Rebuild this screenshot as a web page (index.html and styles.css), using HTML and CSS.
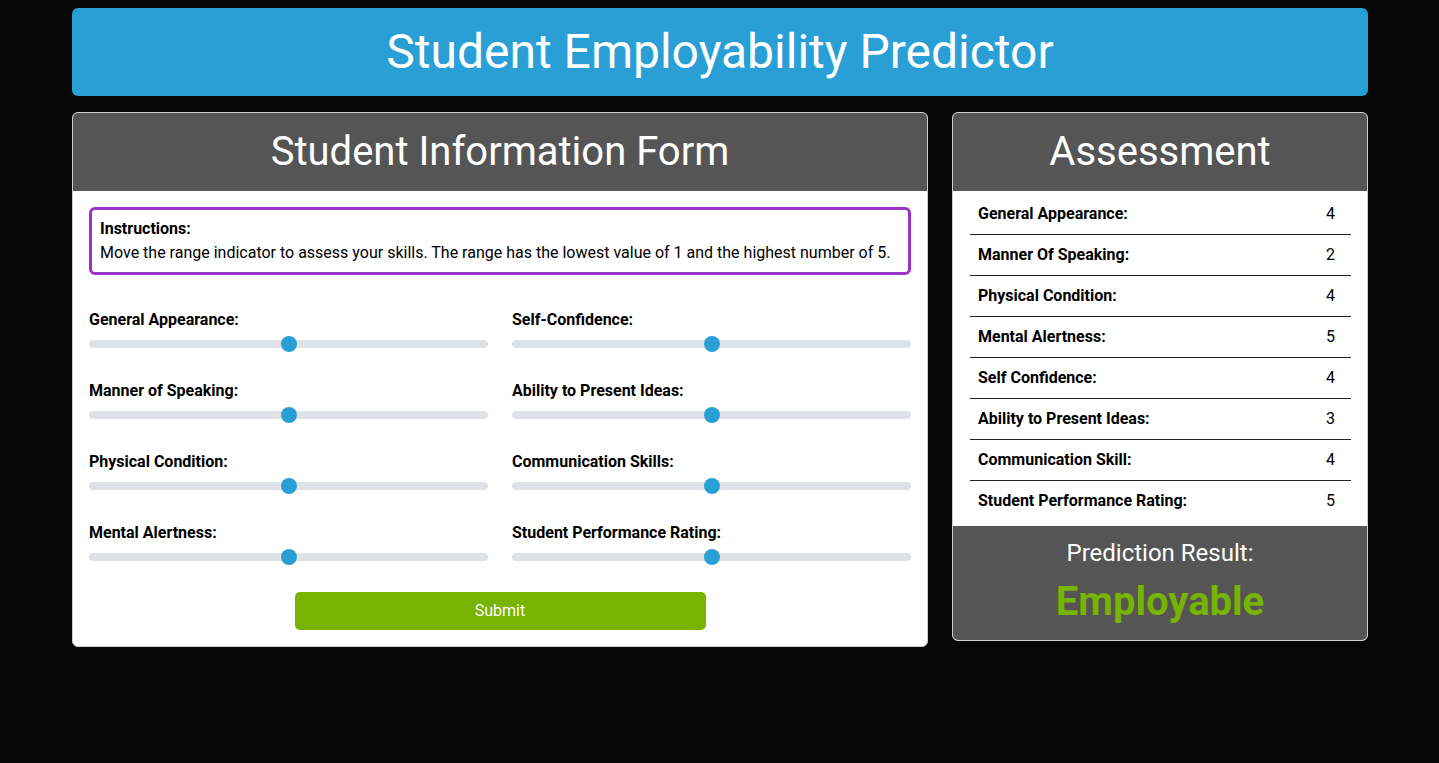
FILE: index.html
```html
<!DOCTYPE html>
<html lang="en">
<head>
<meta charset="utf-8">
<title>Student Employability Predictor</title>
<link rel="stylesheet" href="styles.css">
</head>
<body>
<div class="container">
  <header class="banner">
    <h1>Student Employability Predictor</h1>
  </header>
  <div class="row">
    <section class="card form-card">
      <div class="card-header"><h2>Student Information Form</h2></div>
      <div class="card-body">
        <div class="instructions">
          <strong>Instructions:</strong>
          <p>Move the range indicator to assess your skills. The range has the lowest value of 1 and the highest number of 5.</p>
        </div>
        <form class="fields">
          <div class="field"><label>General Appearance:</label><input type="range" min="1" max="5" value="3"></div>
          <div class="field"><label>Self-Confidence:</label><input type="range" min="1" max="5" value="3"></div>
          <div class="field"><label>Manner of Speaking:</label><input type="range" min="1" max="5" value="3"></div>
          <div class="field"><label>Ability to Present Ideas:</label><input type="range" min="1" max="5" value="3"></div>
          <div class="field"><label>Physical Condition:</label><input type="range" min="1" max="5" value="3"></div>
          <div class="field"><label>Communication Skills:</label><input type="range" min="1" max="5" value="3"></div>
          <div class="field"><label>Mental Alertness:</label><input type="range" min="1" max="5" value="3"></div>
          <div class="field"><label>Student Performance Rating:</label><input type="range" min="1" max="5" value="3"></div>
          <div class="actions"><button type="button" class="submit">Submit</button></div>
        </form>
      </div>
    </section>
    <section class="card result-card">
      <div class="card-header"><h2>Assessment</h2></div>
      <div class="card-body table-body">
        <table class="scores">
          <tr><th>General Appearance:</th><td>4</td></tr>
          <tr><th>Manner Of Speaking:</th><td>2</td></tr>
          <tr><th>Physical Condition:</th><td>4</td></tr>
          <tr><th>Mental Alertness:</th><td>5</td></tr>
          <tr><th>Self Confidence:</th><td>4</td></tr>
          <tr><th>Ability to Present Ideas:</th><td>3</td></tr>
          <tr><th>Communication Skill:</th><td>4</td></tr>
          <tr><th>Student Performance Rating:</th><td>5</td></tr>
        </table>
      </div>
      <div class="card-footer">
        <h3>Prediction Result:</h3>
        <div class="result">Employable</div>
      </div>
    </section>
  </div>
</div>
</body>
</html>
```
FILE: styles.css
```css
* { box-sizing: border-box; }
html, body { margin: 0; padding: 0; }
body {
  background: #060606;
  font-family: Roboto, "Noto Sans", "Liberation Sans", sans-serif;
  font-size: 16px;
  line-height: 1.5;
  color: #000;
}
.container {
  width: 1296px;
  margin: 0 0 0 72px;
  padding-top: 8px;
}
.banner {
  background: #2a9fd6;
  border-radius: 6px;
  padding: 15px 16px;
  text-align: center;
}
.banner h1 {
  margin: 0;
  font-size: 48px;
  font-weight: 400;
  line-height: 1.2;
  color: #fff;
}
.row {
  display: flex;
  align-items: flex-start;
  gap: 24px;
  margin-top: 16px;
}
.card {
  background: #fff;
  border: 1px solid #cfcfcf;
  border-radius: 6px;
  overflow: hidden;
}
.form-card { width: 856px; }
.result-card { width: 416px; }
.card-header {
  background: #555;
  padding: 15px 16px;
  text-align: center;
}
.card-header h2 {
  margin: 0;
  font-size: 40px;
  font-weight: 400;
  line-height: 1.2;
  color: #fff;
}
.card-body { padding: 16px; }
.instructions {
  border: 3px solid #9933cc;
  border-radius: 6px;
  padding: 7px 8px;
}
.instructions strong { display: block; font-weight: 700; }
.instructions p { margin: 0; }
.fields {
  display: grid;
  grid-template-columns: 1fr 1fr;
  column-gap: 24px;
  margin-top: 33px;
}
.field { margin-bottom: 23px; }
.field label {
  display: block;
  font-weight: 700;
  line-height: 24px;
}
.field input[type="range"] {
  -webkit-appearance: none;
  appearance: none;
  display: block;
  width: 100%;
  height: 24px;
  margin: 0;
  padding: 0;
  background: transparent;
}
.field input[type="range"]::-webkit-slider-runnable-track {
  height: 8px;
  border-radius: 4px;
  background: #dee2e6;
}
.field input[type="range"]::-webkit-slider-thumb {
  -webkit-appearance: none;
  width: 16px;
  height: 16px;
  margin-top: -4px;
  border-radius: 50%;
  border: 0;
  background: #2a9fd6;
}
.field input[type="range"]::-moz-range-track {
  height: 8px;
  border-radius: 4px;
  background: #dee2e6;
}
.field input[type="range"]::-moz-range-thumb {
  width: 16px;
  height: 16px;
  border-radius: 50%;
  border: 0;
  background: #2a9fd6;
}
.actions {
  grid-column: 1 / -1;
  display: flex;
  justify-content: center;
}
.submit {
  width: 50%;
  height: 38px;
  border: 0;
  border-radius: 5px;
  background: #77b300;
  color: #fff;
  font-family: inherit;
  font-size: 16px;
}
.table-body { padding: 3px 16px 5px 17px; }
.scores {
  width: 100%;
  border-collapse: collapse;
}
.scores th, .scores td {
  padding: 8px;
  line-height: 24px;
  border-bottom: 1px solid #222;
}
.scores tr:last-child th, .scores tr:last-child td { border-bottom: 0; }
.scores th { text-align: left; font-weight: 700; }
.scores td { text-align: right; padding-right: 16px; }
.card-footer {
  background: #555;
  padding: 13px 16px 14px;
  text-align: center;
}
.card-footer h3 {
  margin: 0 0 11px;
  font-size: 24px;
  font-weight: 400;
  line-height: 1.2;
  color: #fff;
}
.result {
  font-size: 40px;
  font-weight: 700;
  line-height: 1.2;
  color: #77b300;
}
```
